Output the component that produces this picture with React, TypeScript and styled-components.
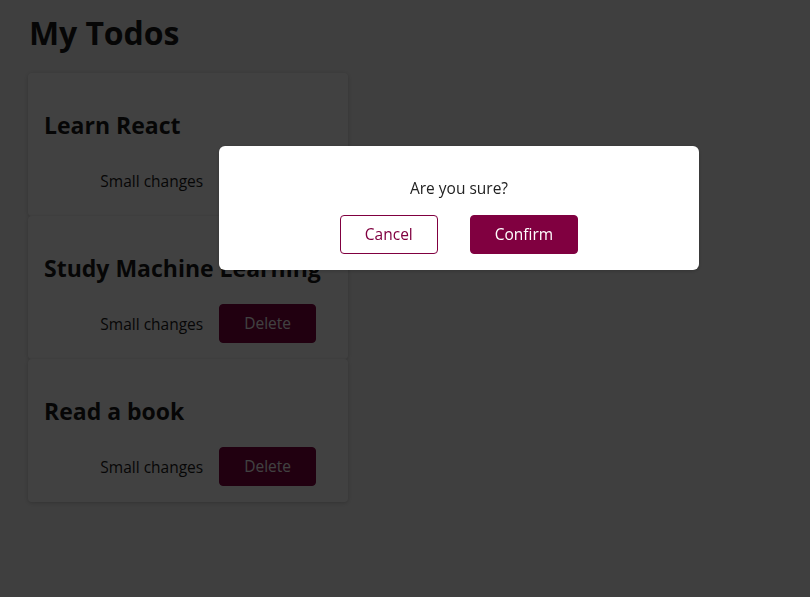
import React from "react";
import styled, { createGlobalStyle } from "styled-components";

const Global = createGlobalStyle`
  html, body { margin: 0; padding: 0; }
  body {
    background: #f6f6f6;
    font-family: "Open Sans", "Noto Sans CJK KR", sans-serif;
    color: #1a1a1a;
  }
`;

const Page = styled.div`
  padding: 11px 20px 40px 28px;
`;

const Title = styled.h1`
  margin: 0 0 19px;
  padding-left: 1px;
  font-size: 32px;
  line-height: 43px;
  font-weight: 700;
  letter-spacing: -0.1px;
`;

const List = styled.div`
  display: flex;
  flex-direction: column;
  width: 320px;
`;

const Card = styled.div`
  box-sizing: border-box;
  height: 143px;
  padding: 16px;
  background: #ffffff;
  border-radius: 4px;
  box-shadow: 0 1px 4px rgba(0, 0, 0, 0.2);
`;

const CardTitle = styled.h2`
  margin: 20px 0;
  font-size: 23px;
  line-height: 32px;
  font-weight: 700;
  white-space: nowrap;
`;

const Actions = styled.div`
  display: flex;
  justify-content: flex-end;
  align-items: center;
  font-size: 15.5px;
`;

const Note = styled.span`
  color: #1a1a1a;
`;

const Button = styled.button<{ $outline?: boolean }>`
  box-sizing: border-box;
  font-family: inherit;
  font-size: 15.5px;
  line-height: 21px;
  height: 39px;
  padding: 8px 24px;
  margin: 0 16px;
  border-radius: 4px;
  border: 1px solid #800040;
  background: ${(p) => (p.$outline ? "#ffffff" : "#800040")};
  color: ${(p) => (p.$outline ? "#800040" : "#ffffff")};
  cursor: pointer;
`;

const Backdrop = styled.div`
  position: fixed;
  inset: 0;
  background: rgba(0, 0, 0, 0.745);
  z-index: 5;
`;

const Modal = styled.div`
  position: fixed;
  top: 146px;
  left: 219px;
  width: 480px;
  box-sizing: border-box;
  padding: 16px;
  background: #ffffff;
  border-radius: 6px;
  box-shadow: 0 1px 4px rgba(0, 0, 0, 0.2);
  text-align: center;
  z-index: 10;
`;

const Question = styled.p`
  margin: 16px 0;
  font-size: 15.5px;
  line-height: 21px;
  color: #222;
`;

const ModalActions = styled.div`
  display: flex;
  justify-content: center;
`;

const todos = ["Learn React", "Study Machine Learning", "Read a book"];

export default function App() {
  return (
    <>
      <Global />
      <Page>
        <Title>My Todos</Title>
        <List>
          {todos.map((t) => (
            <Card key={t}>
              <CardTitle>{t}</CardTitle>
              <Actions>
                <Note>Small changes</Note>
                <Button>Delete</Button>
              </Actions>
            </Card>
          ))}
        </List>
      </Page>
      <Backdrop />
      <Modal>
        <Question>Are you sure?</Question>
        <ModalActions>
          <Button $outline>Cancel</Button>
          <Button>Confirm</Button>
        </ModalActions>
      </Modal>
    </>
  );
}
